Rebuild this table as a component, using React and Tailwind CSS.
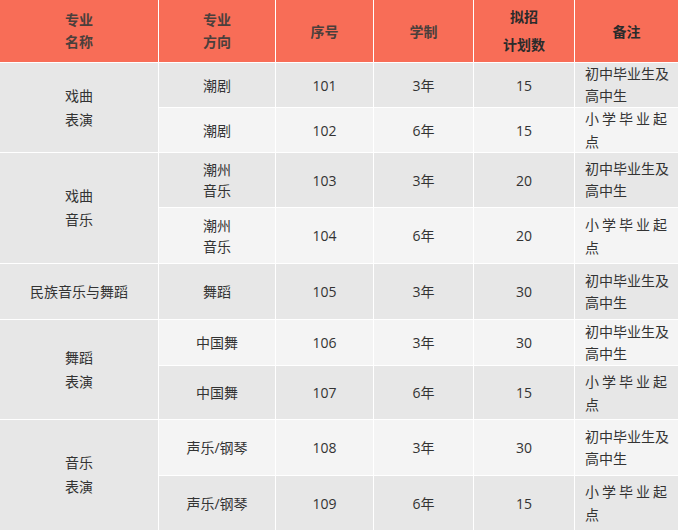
const rows = [
  { dir: ['潮剧'], no: '101', years: '3年', plan: '15', note: 'a' },
  { dir: ['潮剧'], no: '102', years: '6年', plan: '15', note: 'b' },
  { dir: ['潮州', '音乐'], no: '103', years: '3年', plan: '20', note: 'a' },
  { dir: ['潮州', '音乐'], no: '104', years: '6年', plan: '20', note: 'b' },
  { dir: ['舞蹈'], no: '105', years: '3年', plan: '30', note: 'a' },
  { dir: ['中国舞'], no: '106', years: '3年', plan: '30', note: 'a' },
  { dir: ['中国舞'], no: '107', years: '6年', plan: '15', note: 'b' },
  { dir: ['声乐/钢琴'], no: '108', years: '3年', plan: '30', note: 'a' },
  { dir: ['声乐/钢琴'], no: '109', years: '6年', plan: '15', note: 'b' },
]

const majors = [
  { lines: ['戏曲', '表演'], span: 'row-span-2' },
  { lines: ['戏曲', '音乐'], span: 'row-span-2' },
  { lines: ['民族音乐与舞蹈'], span: 'row-span-1' },
  { lines: ['舞蹈', '表演'], span: 'row-span-2' },
  { lines: ['音乐', '表演'], span: 'row-span-2' },
]

function Note({ kind }) {
  if (kind === 'a') {
    return (
      <div className="leading-[22px]">
        <div>初中毕业生及</div>
        <div>高中生</div>
      </div>
    )
  }
  return (
    <div className="leading-[23px] w-[82px]">
      <div className="flex justify-between">
        <span>小</span><span>学</span><span>毕</span><span>业</span><span>起</span>
      </div>
      <div>点</div>
    </div>
  )
}

export default function App() {
  // majors sit in column 1, rows start after header
  const majorStarts = [0, 2, 4, 5, 7]
  const majorRowStart = ['row-start-2', 'row-start-4', 'row-start-6', 'row-start-7', 'row-start-9']
  const dataRowStart = ['row-start-2', 'row-start-3', 'row-start-4', 'row-start-5', 'row-start-6', 'row-start-7', 'row-start-8', 'row-start-9', 'row-start-10']

  return (
    <div className="w-[679px] h-[530px] bg-white font-['Open_Sans','Noto_Sans_CJK_SC',sans-serif] text-[14px] text-[#333333]">
      <div className="grid grid-cols-[158px_116px_97px_99px_100px_103px] grid-rows-[62px_44px_44px_54px_55px_55px_45px_53px_55px_54px] gap-px">
        {/* header */}
        <div className="bg-[#f86d57] flex items-center justify-center text-center leading-[22px] font-bold text-[#4a3f3c]">
          <div>专业<br />名称</div>
        </div>
        <div className="bg-[#f86d57] flex items-center justify-center text-center leading-[22px] font-bold text-[#4a3f3c]">
          <div>专业<br />方向</div>
        </div>
        <div className="bg-[#f86d57] flex items-center justify-center font-bold text-[#4a3f3c]">序号</div>
        <div className="bg-[#f86d57] flex items-center justify-center font-bold text-[#4a3f3c]">学制</div>
        <div className="bg-[#f86d57] flex items-center justify-center text-center leading-[28px] font-bold text-[#2b2b2b]">
          <div>拟招<br />计划数</div>
        </div>
        <div className="bg-[#f86d57] flex items-center justify-center font-bold text-[#2b2b2b]">备注</div>

        {majors.map((m, i) => (
          <div
            key={majorStarts[i]}
            className={`col-start-1 ${majorRowStart[i]} ${m.span} bg-[#e7e7e7] flex items-center justify-center text-center leading-[24px]`}
          >
            <div>
              {m.lines.map((l) => (
                <div key={l}>{l}</div>
              ))}
            </div>
          </div>
        ))}

        {rows.map((r, i) => {
          const bg = i % 2 === 0 ? 'bg-[#e7e7e7]' : 'bg-[#f4f4f4]'
          const rs = dataRowStart[i]
          return [
            <div key={r.no + 'd'} className={`col-start-2 ${rs} ${bg} flex items-center justify-center text-center leading-[21px]`}>
              <div>
                {r.dir.map((d) => (
                  <div key={d}>{d}</div>
                ))}
              </div>
            </div>,
            <div key={r.no + 'n'} className={`col-start-3 ${rs} ${bg} flex items-center justify-center`}>{r.no}</div>,
            <div key={r.no + 'y'} className={`col-start-4 ${rs} ${bg} flex items-center justify-center`}>{r.years}</div>,
            <div key={r.no + 'p'} className={`col-start-5 ${rs} ${bg} flex items-center justify-center`}>{r.plan}</div>,
            <div key={r.no + 'r'} className={`col-start-6 ${rs} ${bg} flex items-center pl-[10px]`}>
              <Note kind={r.note} />
            </div>,
          ]
        })}
      </div>
    </div>
  )
}
